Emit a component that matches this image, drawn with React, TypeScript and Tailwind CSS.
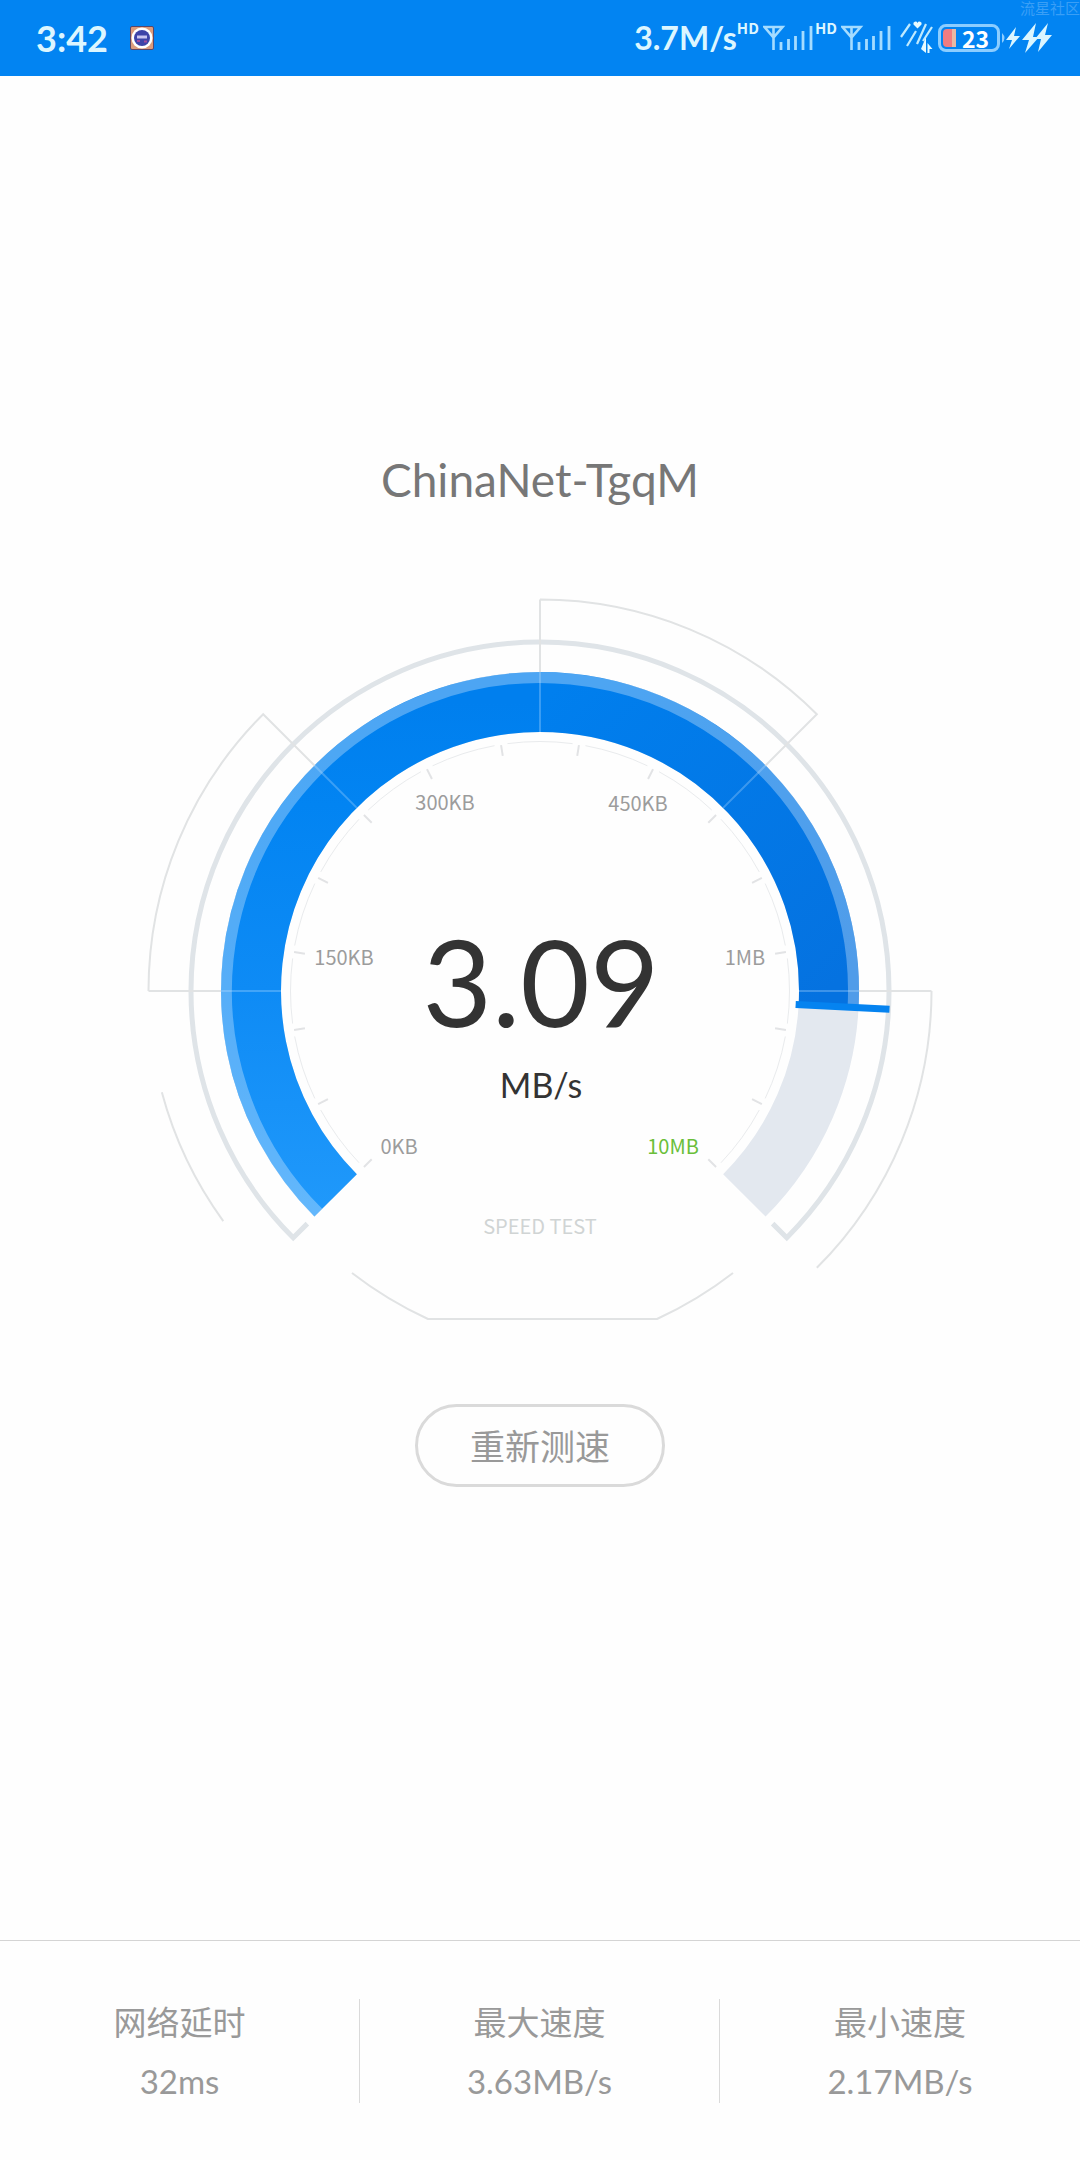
const START_ANGLE = 135;
const TOP_ANGLE = 270;
const NEEDLE_ANGLE = 363;
const END_ANGLE = 405;

const scaleLabels = [
  { text: "0KB", x: -141, y: 163, color: "fill-[#9c9c9c]" },
  { text: "150KB", x: -196, y: -26, color: "fill-[#9c9c9c]" },
  { text: "300KB", x: -95, y: -181, color: "fill-[#9c9c9c]" },
  { text: "450KB", x: 98, y: -180, color: "fill-[#9c9c9c]" },
  { text: "1MB", x: 205, y: -26, color: "fill-[#9c9c9c]" },
  { text: "10MB", x: 133, y: 163, color: "fill-[#6abf3a]" },
];

const stats = [
  { label: "网络延时", value: "32ms" },
  { label: "最大速度", value: "3.63MB/s" },
  { label: "最小速度", value: "2.17MB/s" },
];

// Angles are in degrees, clockwise from 3 o'clock
const point = (r: number, angle: number) => {
  const rad = (angle * Math.PI) / 180;
  return `${(r * Math.cos(rad)).toFixed(2)} ${(r * Math.sin(rad)).toFixed(2)}`;
};

const arc = (r: number, from: number, to: number) =>
  `M${point(r, from)} A${r} ${r} 0 ${to - from > 180 ? 1 : 0} 1 ${point(r, to)}`;

const spoke = (from: number, to: number, angle: number) =>
  `M${point(from, angle)} L${point(to, angle)}`;

function SignalIcon() {
  return (
    <svg viewBox="0 0 50 26" className="h-[26px] w-[50px]" fill="none" stroke="#a5dcff">
      <path d="M1.5 2h18l-9 10.500z M10.500 2v23" strokeWidth="2.600" />
      <path d="M18 17v8 M25.500 14v11 M32.500 11v14 M40 6v19 M48 1v24" strokeWidth="2.800" />
    </svg>
  );
}

function StatusBar() {
  return (
    <header className="relative flex h-[76px] items-center overflow-hidden bg-[#0284f2] pr-7 pl-9 text-[#dcf6ff]">
      <time className="font-['Lato',sans-serif] text-[36px] leading-[40px] font-bold">3:42</time>
      <svg viewBox="0 0 24 24" className="ml-[22px] h-6 w-6">
        <rect x="0.500" y="0.500" width="23" height="23" rx="1.500" fill="#dc9c7c" stroke="#5b4668" />
        <circle cx="12" cy="12" r="10.500" fill="#fff" />
        <circle cx="12" cy="12" r="8" fill="#3d43a8" />
        <path d="M7 11h10" stroke="#c9c4f0" strokeWidth="3" />
        <path d="M7 15h3 M14 15.500h3" stroke="#a04a9c" strokeWidth="2" />
      </svg>

      <div className="ml-auto flex items-center">
        <span className="font-['Lato',sans-serif] text-[32px] leading-[40px] font-bold">3.7M/s</span>
        <span className="mb-5 text-[15px] leading-4 font-bold">HD</span>
        <span className="ml-1">
          <SignalIcon />
        </span>
        <span className="mb-5 ml-0.5 text-[15px] leading-4 font-bold">HD</span>
        <span className="ml-1">
          <SignalIcon />
        </span>
        <svg viewBox="0 0 34 34" className="ml-[9px] h-[34px] w-[34px]" fill="none">
          <path d="M1 16L10 3 M7 25L16 10 M17 23L26 3 M23 20L32 6" stroke="#bfeaff" strokeWidth="2.200" />
          <path d="M17.500 7.500l-4-4a2 2 0 0 1 4-1.500a2 2 0 0 1 4 1.500z" fill="#e8fbff" />
          <path d="M26 16v16l-5-4z M27.500 32V22l5 6h-3v4z" fill="#e8fbff" />
        </svg>
        <div className="mr-0.5 ml-1 flex h-7 w-[62px] items-center rounded-lg border-[3px] border-[#8ccdff] px-[2px]">
          <span className="h-[18px] w-[9px] rounded-l-sm bg-[#f07c80]" />
          <span className="h-[18px] w-1 bg-[#e8b9a4]" />
          <span className="grow text-center text-[23px] leading-6 font-bold text-white">23</span>
        </div>
        <svg viewBox="0 0 50 34" className="h-[34px] w-[50px]" fill="#dcf6ff">
          <path d="M0 12q5 5 0 10z" fill="#8ccdff" />
          <path d="M14 6L4 19h6L7 28L18 15h-6z" />
          <path d="M34 2L20 19h7L23 32L37 16h-6z M46 2L33 18h6L36 31L50 14h-7z" />
        </svg>
      </div>

      <span className="absolute top-0 right-0 text-[15px] leading-4 whitespace-nowrap text-[#3a9ff6]">
        流星社区
      </span>
    </header>
  );
}

function Gauge() {
  const ticks = Array.from({ length: 16 }, (_, i) => START_ANGLE + i * 18);

  return (
    <svg viewBox="-400 -396 800 730" className="mt-[85px] w-full max-w-[800px]" fill="none">
      <defs>
        <linearGradient id="rising" gradientUnits="userSpaceOnUse" x1="0" y1="226" x2="0" y2="-289">
          <stop offset="0" stopColor="#2099fb" />
          <stop offset="0.440" stopColor="#0e8bf5" />
          <stop offset="0.800" stopColor="#0284f2" />
          <stop offset="1" stopColor="#007fee" />
        </linearGradient>
        <linearGradient id="falling" gradientUnits="userSpaceOnUse" x1="0" y1="-289" x2="289" y2="0">
          <stop offset="0" stopColor="#007fee" />
          <stop offset="1" stopColor="#0572e0" />
        </linearGradient>
      </defs>

      {/* Speed band */}
      <path d={arc(289, START_ANGLE, END_ANGLE)} stroke="#e3e8ef" strokeWidth="60" />
      <path d={arc(289, TOP_ANGLE, NEEDLE_ANGLE)} stroke="url(#falling)" strokeWidth="60" />
      <path d={arc(289, START_ANGLE, TOP_ANGLE + 0.2)} stroke="url(#rising)" strokeWidth="60" />
      <path d={arc(313.5, START_ANGLE, NEEDLE_ANGLE)} stroke="#fff" strokeOpacity="0.300" strokeWidth="11" />

      {/* Outer frame */}
      <path
        d={`M${point(329, 135)} L${point(349, 135)} A349 349 0 1 1 ${point(349, 45)} L${point(329, 45)}`}
        stroke="#dfe4e8"
        strokeWidth="5"
      />
      <g stroke="#e1e3e4" strokeWidth="2">
        <path d={`${arc(391.5, 180, 225)} L${point(319, 225)} ${spoke(391.5, 319, 180)}`} />
        <path d={`${arc(391.5, 270, 315)} L${point(319, 315)} ${spoke(391.5, 319, 270)}`} />
        <path d={`${arc(391.5, 0, 45)} ${spoke(391.5, 319, 0)}`} />
        <path d={arc(391.5, 144, 165)} />
        <path d="M-188 282A391 391 0 0 0 -112 328H117A391 391 0 0 0 193 282" />
      </g>
      <g stroke="#bfe0ff" strokeOpacity="0.300" strokeWidth="2">
        {[180, 225, 270, 315, 360].map((angle) => (
          <path key={angle} d={spoke(319, 259, angle)} />
        ))}
      </g>

      {/* Tick ring */}
      {ticks.map((angle, index) => (
        <g key={angle}>
          <path d={spoke(249, 238, angle)} stroke="#e2e3e5" strokeWidth="2" />
          {index < ticks.length - 1 && (
            <path d={arc(249.5, angle + 1.5, angle + 16.5)} stroke="#e9ebed" />
          )}
        </g>
      ))}

      <path d={spoke(256, 350, NEEDLE_ANGLE)} stroke="#0583f0" strokeWidth="7" />

      <g textAnchor="middle" className="text-[20px]">
        {scaleLabels.map((label) => (
          <text key={label.text} x={label.x} y={label.y} className={label.color}>
            {label.text}
          </text>
        ))}
        <text x="0" y="243" className="fill-[#d0d4d4]">
          SPEED TEST
        </text>
      </g>
      <g textAnchor="middle" className="fill-[#333] font-['Lato',sans-serif]">
        <text x="1" y="36" className="text-[120px]">
          3.09
        </text>
        <text x="1" y="107" className="text-[34px]">
          MB/s
        </text>
      </g>
    </svg>
  );
}

export default function App() {
  return (
    <div className="flex min-h-screen flex-col bg-[#fefefe] font-['Noto_Sans_CJK_SC',sans-serif]">
      <StatusBar />

      <main className="flex grow flex-col items-center pt-[374px] pb-20">
        <h1 className="font-['Lato',sans-serif] text-[46px] leading-[60px] text-[#777]">ChinaNet-TgqM</h1>
        <Gauge />
        <button
          type="button"
          className="mt-[79px] h-[83px] w-[250px] rounded-full border-[3px] border-[#dadada] text-[35px] text-[#999]"
        >
          重新测速
        </button>
      </main>

      <footer className="border-t border-[#d4d4d4] pt-[58px] pb-[57px]">
        <dl className="grid grid-cols-3 divide-x divide-[#dadada]">
          {stats.map((stat) => (
            <div key={stat.label} className="flex h-[104px] flex-col items-center text-[#999]">
              <dt className="text-[33px] leading-[44px]">{stat.label}</dt>
              <dd className="mt-[18px] font-['Lato',sans-serif] text-[33px] leading-[40px]">{stat.value}</dd>
            </div>
          ))}
        </dl>
      </footer>
    </div>
  );
}
